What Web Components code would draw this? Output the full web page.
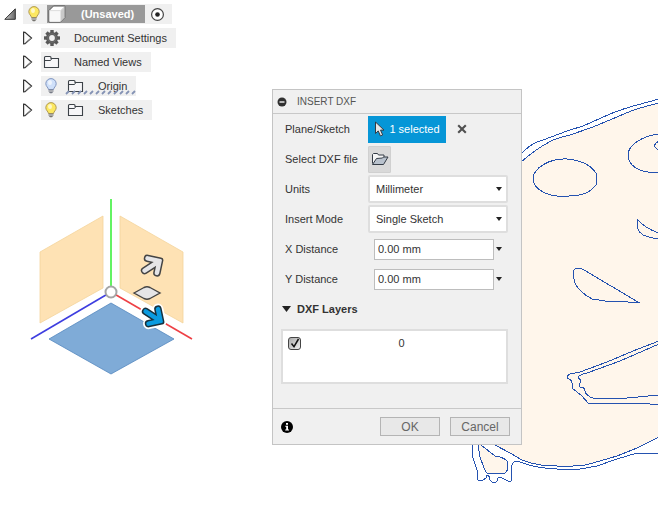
<!DOCTYPE html>
<html lang="en">
<head>
<meta charset="utf-8">
<title>Insert DXF</title>
<style>
  body { margin: 0; min-height: 100vh; position: relative; overflow: hidden; background: #fff; color: #333; font: 11px/16px "Liberation Sans", Arial, sans-serif; }
  model-canvas { position: absolute; inset: 0; }
  browser-tree { position: absolute; left: 0; top: 4px; }
  command-dialog { position: absolute; left: 272px; top: 89px; }
</style>
</head>
<body>
<model-canvas></model-canvas>
<browser-tree>
  <tree-root label="(Unsaved)"></tree-root>
  <tree-node><ui-icon slot="icon" name="gear"></ui-icon>Document Settings</tree-node>
  <tree-node><ui-icon slot="icon" name="folder"></ui-icon>Named Views</tree-node>
  <tree-node class="pending"><ui-icon slot="bulb" name="bulb-off"></ui-icon><ui-icon slot="icon" name="folder"></ui-icon>Origin</tree-node>
  <tree-node><ui-icon slot="bulb" name="bulb-on"></ui-icon><ui-icon slot="icon" name="folder"></ui-icon>Sketches</tree-node>
</browser-tree>
<command-dialog heading="INSERT DXF">
  <selection-field label="Plane/Sketch" value="1 selected"></selection-field>
  <file-field label="Select DXF file"></file-field>
  <select-field label="Units" options="Millimeter,Centimeter,Meter,Inch,Foot"></select-field>
  <select-field label="Insert Mode" options="Single Sketch,One Sketch Per Layer"></select-field>
  <value-field label="X Distance" value="0.00 mm"></value-field>
  <value-field label="Y Distance" value="0.00 mm"></value-field>
  <layer-list heading="DXF Layers"></layer-list>
</command-dialog>

<script>
const bulb = (glass, edge, base) => `<svg width="16" height="18" viewBox="0 0 16 18"><path d="M8 1.600a5.200 5.200 0 0 0-5.200 5.100c0 2.600 2.500 3.800 2.700 5.900h5c.2-2.100 2.700-3.300 2.700-5.900A5.200 5.200 0 0 0 8 1.600z" fill="${glass}" stroke="${edge}"/><ellipse cx="7" cy="5.500" rx="2" ry="2.500" fill="#fff" opacity=".65"/><path d="M5.700 12.500h4.600v2.300L9 16.300H7l-1.300-1.500z" fill="${base}"/><path d="M6 14h4" stroke="#ddd"/></svg>`;
const icons = {
  'bulb-on': bulb('#fce861', '#b19a55', '#76746f'),
  'bulb-off': bulb('#cfe0fa', '#8196c0', '#777b86'),
  folder: `<svg width="18" height="16" viewBox="0 0 18 16"><path d="M1.500 13.500v-10q0-1 1-1h4.500q1 0 1 1v1h7.500v9z" fill="#f6f6f8" stroke="#3c4248" stroke-width="1.100"/><path d="M2 6.500h5.500l1-1.500" fill="none" stroke="#3c4248"/></svg>`,
  gear: `<svg width="18" height="18" viewBox="-9 -9 18 18"><g fill="#585858"><g><rect x="-1.700" y="-8" width="3.400" height="16"/><rect x="-8" y="-1.700" width="16" height="3.400"/></g><g transform="rotate(45)"><rect x="-1.700" y="-7.800" width="3.400" height="15.600"/><rect x="-7.800" y="-1.700" width="15.600" height="3.400"/></g><circle r="6"/></g><circle r="2.900" fill="#f0f0f0"/><circle r="4.200" fill="none" stroke="#777" stroke-width=".8"/></svg>`,
  cube: `<svg width="20" height="20" viewBox="0 0 20 20"><path d="M2 6.500 6.500 2h11.300v11.500L13.500 18H2z" fill="#fff" stroke="#555"/><path d="M2.500 6.800h11v11h-11z" fill="#f8f8f8"/><path d="M13.500 7v11l4-4.500V3z" fill="#c9c9c9"/><path d="M2.500 6.600h11l4-4" fill="none" stroke="#ddd"/></svg>`,
  target: `<svg width="15" height="15" viewBox="0 0 15 15"><circle cx="7.500" cy="7.500" r="5.900" fill="#fff" stroke="#444" stroke-width="1.200"/><circle cx="7.500" cy="7.500" r="2.300" fill="#222"/></svg>`,
  open: `<svg width="18" height="14" viewBox="0 0 18 14"><path d="M1.500 11.500V2.500l1-1h4l1 1.500h5.500v3" fill="#f5f5f5" stroke="#343c46"/><path d="M1.500 12.500 5.500 6.500l6-.5 1-1h4.500l-4.500 7.500z" fill="#b9c2cd" stroke="#343c46"/></svg>`,
  pointer: `<svg width="12" height="16" viewBox="0 0 12 16"><path d="M1.500 1v11.500l2.700-2.600 2.200 5 2.300-1-2.200-4.800H10z" fill="#e6e6e6" stroke="#333b44"/></svg>`,
  clear: `<svg width="10" height="10" viewBox="0 0 10 10"><path d="m1.200 1.200 7.600 7.600m0-7.600L1.200 8.800" stroke="#505050" stroke-width="2.100"/></svg>`,
  caret: `<svg width="6" height="4" viewBox="0 0 6 4"><path d="M0 0h6L3 4z" fill="#222"/></svg>`,
  collapse: `<svg width="10" height="10" viewBox="0 0 10 10"><circle cx="5" cy="5" r="4.500" fill="#303030"/><path d="M2.500 5h5" stroke="#fff" stroke-width="1.300"/></svg>`,
  info: `<svg width="12" height="12" viewBox="0 0 12 12"><circle cx="6" cy="6" r="6" fill="#000"/><path d="M5 2h2v1.700H5zM4.300 4.800H7v3.700h1v1H4.200v-1h1V5.800h-.9z" fill="#fff"/></svg>`,
  down: `<svg width="9" height="6" viewBox="0 0 9 6"><path d="M0 0h9L4.500 6z" fill="#222"/></svg>`,
  closed: `<svg width="11" height="14" viewBox="0 0 11 14"><path d="M1.600 1.200v11.600L3 12.700 9.500 7 3 1.300z" fill="#fcfcfc" stroke="#333" stroke-width="1.200"/><path d="m3 12 6-5" stroke="#999"/></svg>`,
  expanded: `<svg width="12" height="12" viewBox="0 0 12 12"><defs><linearGradient id="g"><stop stop-color="#ccc"/><stop offset="1" stop-color="#666"/></linearGradient></defs><path d="M.8 11.300 11.300.800v10.500z" fill="url(#g)" stroke="#333"/></svg>`,
  tick: `<svg width="14" height="14" viewBox="0 0 14 14"><path d="m3.500 7.500 2.500 3.200L10.500 3" fill="none" stroke="#111" stroke-width="1.500"/></svg>`
};
const reset = `:host{display:block}*{box-sizing:border-box}button{font:inherit;color:inherit;margin:0;padding:0;border:0;background:none;display:inline-flex;align-items:center;justify-content:center}`;
const rowCss = reset + `.row{display:grid;grid-template-columns:83px minmax(0,1fr);align-items:center;height:30px;padding:0 13px 0 12px}`;
const define = (name, render) => customElements.define(name, class extends HTMLElement {
  constructor() { super(); this.attachShadow({ mode: 'open' }); }
  connectedCallback() { this.shadowRoot.innerHTML = render(this); }
});
const attr = (el, n) => el.getAttribute(n) || '';

define('ui-icon', el => `<style>:host{display:inline-flex;flex:none}svg{display:block}</style>${icons[attr(el, 'name')]}`);

define('browser-tree', () => `<style>${reset}:host{display:flex;flex-direction:column;align-items:flex-start;gap:4px}</style><slot></slot>`);

define('tree-root', el => `<style>${reset}
  :host{display:flex;align-items:center;height:20px;gap:7px;padding-left:4px}
  .bar{display:flex;align-items:center;height:20px;background:#f0f0f0;padding:0 7px 0 3px;gap:5px}
  .name{display:flex;align-items:center;height:18px;background:#999;color:#fff;font-weight:700;padding-right:11px;gap:14px}
  </style><button aria-label="Collapse"><ui-icon name="expanded"></ui-icon></button>
  <div class="bar"><button aria-label="Visibility"><ui-icon name="bulb-on"></ui-icon></button>
  <div class="name"><ui-icon name="cube"></ui-icon><span>${attr(el, 'label')}</span></div>
  <button aria-label="Activate"><ui-icon name="target"></ui-icon></button></div>`);

define('tree-node', () => `<style>${reset}
  :host{display:flex;align-items:center;height:20px;gap:8px;padding-left:22px}
  .bar{position:relative;display:flex;align-items:center;height:20px;background:#f0f0f0;padding:0 9px 0 2px}
  slot[name=icon]::slotted(*){width:18px;margin-right:13px}
  slot[name=bulb]::slotted(*){margin-right:8px}
  .wave{display:none;position:absolute;left:24px;right:0;bottom:1px;width:72px;height:5px}
  :host(.pending) .wave{display:block}
  </style><button aria-label="Expand"><ui-icon name="closed"></ui-icon></button>
  <div class="bar"><slot name="bulb"></slot><slot name="icon"></slot><slot></slot>
  <svg class="wave" viewBox="0 0 72 5"><path d="${Array.from({ length: 12 }, (_, i) => `M${i * 6 + 1} 4l3-3`).join('')}" stroke="#8593b5" stroke-width="1.800"/></svg></div>`);

define('command-dialog', el => `<style>${reset}
  :host{background:#f0f0f0;border:1px solid #c4c4c4;width:250px;box-sizing:border-box}
  header{display:flex;align-items:center;gap:10px;height:24px;padding-left:4px;border-bottom:1px solid #c8c8c8;color:#555;font-size:10px}
  footer{display:flex;align-items:center;gap:10px;border-top:1px solid #c8c8c8;height:36px;padding:0 11px 0 8px;margin-top:24px}
  .info{margin-right:auto}
  .action{width:60px;height:19px;border:1px solid #b4b4b4;background:#e8e8e8;color:#666;font-size:12px}
  </style><header><button aria-label="Collapse dialog"><ui-icon name="collapse"></ui-icon></button><span>${attr(el, 'heading')}</span></header>
  <main><slot></slot></main>
  <footer><button class="info" aria-label="Information"><ui-icon name="info"></ui-icon></button><button class="action">OK</button><button class="action">Cancel</button></footer>`);

define('selection-field', el => `<style>${rowCss}
  .control{display:flex;align-items:center;gap:11px}
  .pick{width:78px;height:27px;background:#0696d7;color:#fff;gap:3px}
  </style><div class="row"><span id="l">${attr(el, 'label')}</span><div class="control">
  <button class="pick" aria-describedby="l"><ui-icon name="pointer"></ui-icon><span>${attr(el, 'value')}</span></button>
  <button aria-label="Clear selection"><ui-icon name="clear"></ui-icon></button></div></div>`);

define('file-field', el => `<style>${rowCss}.open{width:23px;height:27px;background:#d9d9d9;border:1px solid #d0d0d0;border-radius:1px}</style>
  <div class="row"><span id="l">${attr(el, 'label')}</span><button class="open" aria-labelledby="l"><ui-icon name="open"></ui-icon></button></div>`);

define('select-field', el => `<style>${rowCss}
  .control{display:grid;align-items:center}
  .control>*{grid-area:1/1}
  select{appearance:none;width:100%;height:28px;margin:0;padding:0 6px;border:2px solid #dedede;border-radius:2px;background:#fff;color:inherit;font:inherit}
  ui-icon{justify-self:end;margin-right:6px;pointer-events:none}
  </style><div class="row"><label for="s">${attr(el, 'label')}</label><div class="control"><select id="s">${attr(el, 'options').split(',').map(o => `<option>${o}</option>`).join('')}</select><ui-icon name="caret"></ui-icon></div></div>`);

define('value-field', el => `<style>${rowCss}
  .control{display:flex;align-items:center;gap:2px;padding:0 6px}
  input{flex:1;min-width:0;height:21px;margin:0;padding:0 3px;border:1px solid #bdbdbd;background:#fff;color:inherit;font:inherit}
  </style><div class="row"><label for="v">${attr(el, 'label')}</label><div class="control"><input id="v" value="${attr(el, 'value')}"><button aria-label="${attr(el, 'label')} options"><ui-icon name="caret"></ui-icon></button></div></div>`);

define('layer-list', el => `<style>${reset}
  .head{height:30px;padding-left:9px;gap:6px;font-weight:700}
  .box{margin:5px 13px 0 8px;height:55px;border:2px solid #dedede;background:#fff;padding:4px 5px}
  label{display:grid;grid-template-columns:14px 1fr;align-items:center;text-align:center}
  input,.tick{grid-area:1/1}
  input{appearance:none;width:13px;height:13px;margin:0;border:1px solid #444;border-radius:3px;background:linear-gradient(135deg,#aaa,#eee)}
  .tick{pointer-events:none;z-index:1}
  input:not(:checked)+.tick{visibility:hidden}
  label span{grid-area:1/2}
  </style><button class="head"><ui-icon name="down"></ui-icon><span>${attr(el, 'heading')}</span></button>
  <div class="box"><label><input type="checkbox" checked><ui-icon class="tick" name="tick"></ui-icon><span>0</span></label></div>`);

const arrow = 'M-13-3A3 3 0 0 0-13 3H-2.500L-6 6.500A3 3 0 0 0-1.800 10.800L7.500 1.500Q9 0 7.500-1.500L-1.800-10.800A3 3 0 0 0-6-6.500L-2.500-3z';
define('model-canvas', () => `<style>:host{display:block}svg{display:block;width:100%;height:100%}</style>
  <svg viewBox="0 0 658 511" preserveAspectRatio="xMinYMin slice" role="img" aria-label="Origin planes and imported sketch">
  <path fill="#fff6eb" d="M490 190 522 162 537 149 553 140 570 135 593 127 617 117 633 109 658 103V437L637 448 617 456 593 463 573 466H557L535 464 522 460 510 453 495 445V440z"/>
  <path fill="#fff6eb" d="M478 440V445L480 457 484 468 489 474 505 473 508 468 506 460 495 456 481 445V440z"/>
  <g fill="none" stroke="#2452b0" stroke-width="1" shape-rendering="crispEdges">
  <path d="M520 155 Q528 146 537 142L543 140 567 131 583 126 610 114 Q625 108 637 105L659 99"/>
  <path d="M520 163 Q535 149 553 140 Q560 137 570 135L593 127 617 117 Q633 109 659 103"/>
  <path d="M567 159C578 160 590 164 596 173V185C590 193 579 196 569 196H557C545 195 533 188 533 179C533 168 550 158 567 159z"/>
  <path d="M659 134C642 136 628 145 628 155S638 173 659 173M659 141Q650 146 659 150M659 233Q646 229 637 219C637 227 637 231 643 235Q650 238 659 239"/>
  <path d="M573 271Q575 268 578 268Q581 268 584 270L638 302H628L605 301 592 299Q579 292 575 283Q573 278 573 271z"/>
  <path d="M659 341 633 351 607 362 580 372 570 374Q567 375 567 378Q572 380 572 383V388L582 396 588 403H640L650 404H659"/>
  <path d="M659 344 620 361 587 373Q578 375 578 378Q581 379 581 382Q578 385 580 387Q585 387 585 391Q586 396 593 398L607 399 627 398 659 395"/>
  <path d="M495 445 510 453 522 460Q532 464 541 465L557 466H573Q584 466 593 463L617 456 637 448 659 437"/>
  <path d="M472 440V447L473 458 477 470 478 480Q482 482 486 478L487 475Q490 476 490 480Q494 485 497 481Q498 477 500 477L508 481H511L512 465Q513 461 517 461L523 463Q535 468 557 469H580L597 466 617 459 637 453H654L659 454"/>
  <path d="M478 440V445L480 457 484 468Q486 473 489 474L505 473Q507 472 508 468Q508 461 506 460Q502 457 495 456L481 445V440"/>
  </g>
  <path d="m40 252 63-36v72l-63 35zM120 216l63 36v71l-63-35z" fill="#fee2b4" stroke="#f4d49c" stroke-width=".8"/>
  <path d="m111 303 63 36-63 35-62-35z" fill="#7fabd7" stroke="#5488bf" stroke-width=".8"/>
  <path d="M111 199v93" stroke="#3cf03c" stroke-width="1.600"/>
  <path d="m111 292-80 47" stroke="#3e3ee0" stroke-width="1.600"/>
  <path d="m111 292 81 47" stroke="#ee4045" stroke-width="1.600"/>
  <circle cx="111" cy="292" r="5.500" fill="#fff" stroke="#a5a5a5" stroke-width="2"/>
  <path d="${arrow}" transform="translate(155.500 263.500) rotate(-33)" fill="#e5e5e7" stroke="#444" stroke-width="1.500"/>
  <path d="m134 293 10-5.500q3-1.500 6 0l10 5.500-10 5.500q-3 1.500-6 0z" fill="#e5e5e7" stroke="#444" stroke-width="1.400"/>
  <path d="${arrow}" transform="translate(156.500 318.500) rotate(33)" fill="#fff" stroke="#fff" stroke-width="5"/>
  <path d="${arrow}" transform="translate(156.500 318.500) rotate(33)" fill="#0a9be0" stroke="#18303c" stroke-width="1.500"/>
  </svg>`);
</script>
</body>
</html>
